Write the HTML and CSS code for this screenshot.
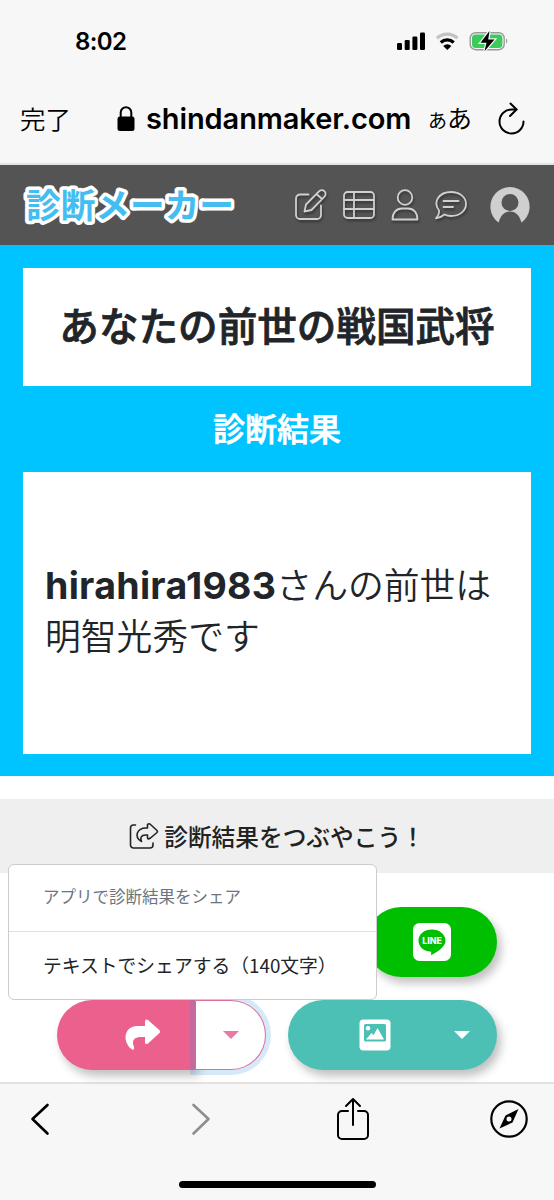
FILE: index.html
```html
<!DOCTYPE html>
<html lang="ja">
<head>
<meta charset="utf-8">
<title>診断メーカー</title>
<link rel="stylesheet" href="styles.css">
</head>
<body>
<div class="phone">
  <div class="browser-top">
    <div class="status">
      <span class="clock">8:02</span>
      <svg class="status-icons" width="112" height="24" viewBox="0 0 112 24">
        <g fill="#000"><rect x="0" y="13" width="5" height="7" rx="1.3"/><rect x="7.700" y="10" width="5" height="10" rx="1.3"/><rect x="15.400" y="6.500" width="5" height="13.500" rx="1.3"/><rect x="23" y="2.500" width="5" height="17.500" rx="1.3"/></g>
        <path d="M40 8.200a15 15 0 0 1 20.500 0" fill="none" stroke="#c3c3c3" stroke-width="3.400"/>
        <path d="M43.800 12.400a9.600 9.600 0 0 1 12.900 0" fill="none" stroke="#000" stroke-width="3.400"/>
        <path d="M46.200 15.900a6 6 0 0 1 8.200 0L50.300 20Z"/>
        <rect x="73.200" y="2.700" width="34" height="17" rx="5.500" fill="none" stroke="#999" stroke-width="1.400"/>
        <path d="M109 8.500a3 3 0 0 1 0 5z" fill="#999"/>
        <rect x="75" y="4.500" width="30.400" height="13.400" rx="3.600" fill="#3bcb5b"/>
        <path d="M92.500 1 83.500 12.700H89.500L87.500 21.200 97.500 9.500H91.200Z" fill="#000" stroke="#f7f7f7" stroke-width="2.500" paint-order="stroke"/>
      </svg>
    </div>
    <div class="address">
      <span class="done">完了</span>
      <svg class="lock" width="18" height="26" viewBox="0 0 18 26"><rect x=".5" y="10.500" width="17" height="14.500" rx="2.500"/><path d="M3.700 11V6.500a5.300 5.300 0 0 1 10.600 0V11" fill="none" stroke="#000" stroke-width="2"/></svg>
      <span class="domain">shindanmaker.com</span>
      <span class="reader"><small>あ</small>あ</span>
      <svg class="reload" width="28" height="34" viewBox="0 0 28 34"><g fill="none" stroke="#000" stroke-width="2" stroke-linecap="round" stroke-linejoin="round"><path d="M25.500 19.500A12 12 0 1 1 13.500 7.500h5"/><path d="m12.500 1.500 6 6-6.500 6.500"/></g></svg>
    </div>
  </div>

  <header class="site-header">
    <svg class="logo" width="218" height="46" viewBox="0 0 218 46"><text x="6" y="36" textLength="208" lengthAdjust="spacingAndGlyphs">診断メーカー</text></svg>
    <nav class="site-nav">
      <svg width="32" height="32" viewBox="0 0 32 32"><path d="M13.500 5.500H5a4 4 0 0 0-4 4V26a4 4 0 0 0 4 4h17a4 4 0 0 0 4-4v-9.500M9.500 22.500l1.500-7L24 2.300a3.700 3.700 0 0 1 5.600 5.200L16.500 21ZM21.500 5l5.500 5"/></svg>
      <svg width="32" height="32" viewBox="0 0 32 32"><rect x="1" y="3" width="30" height="26" rx="3.500"/><path d="M1 11h30M1 20h30M11 3v26"/></svg>
      <svg width="28" height="32" viewBox="0 0 28 32"><circle cx="14" cy="8.500" r="7.300"/><path d="M1.500 30.500c0-7 4-11 9.500-11h6c5.500 0 9.500 4 9.500 11Z"/></svg>
      <svg width="32" height="32" viewBox="0 0 32 32"><path d="M4 21.500C-2.500 13 4 3 16 3c8.500 0 15 5 15 12S24.500 27 16 27c-2.500 0-4.500-.5-6.500-1.500-2.500 2-5.500 3.500-8.500 3.800 2-2 3.500-5 3-7.800ZM8.500 12h15M8.500 18H18"/></svg>
      <svg class="avatar" width="40" height="38" viewBox="0 0 40 38"><path d="M8.500 36.500A19.600 19.600 0 1 1 31.500 36.500Z"/><circle class="cutout" cx="20" cy="16.500" r="8.500"/><path class="cutout" d="M8.500 37C10.500 29.500 14 25.500 20 25.500S29.500 29.500 31.500 37Z"/></svg>
    </nav>
  </header>

  <main>
    <section class="diagnosis">
      <h1 class="card title">あなたの前世の戦国武将</h1>
      <h2 class="result-heading">診断結果</h2>
      <div class="card result"><b>hirahira1983</b>さんの前世は<br>明智光秀です</div>
    </section>
    <div class="tweet-heading">
      <svg width="30" height="26" viewBox="0 0 30 26"><path d="M6.500 2H4.500A3 3 0 0 0 1.500 5v17a3 3 0 0 0 3 3H21a3 3 0 0 0 3-3v-2M18.500 5V1.500Q20 0 21.500 1.500L28 7.500Q29 8.500 28 9.500L21.500 15Q18.500 17 18.500 14.500V12h-2C12 12 11 15 12.500 18.500 4.500 14 8 5 17 5Z"/></svg>
      <span>診断結果をつぶやこう！</span>
    </div>
    <section class="share">
      <div class="share-grid">
        <button class="pill line">
          <svg width="38" height="38" viewBox="0 0 38 38"><rect width="38" height="38" rx="6.500" fill="#fff"/><path d="M19 6.500c-7.800 0-13.500 4.800-13.500 11S10.500 28 17 28.500c1.800.2 1.200 1.200 1 3.700 4-1.800 15-8 14.500-14.700C32.300 11.300 26.500 6.500 19 6.500Z" fill="#00bf00"/><text x="9.200" y="21.200" textLength="19.600" lengthAdjust="spacingAndGlyphs">LINE</text></svg>
        </button>
        <div class="pill split pink">
          <button class="action"><svg width="36" height="32" viewBox="0 0 36 32"><path fill="#fff" d="M20 2.500C20 0 22 0 23 1l11.500 10.200q1.500 1.400 0 2.800L23 24.500c-1.200 1.200-3 .5-3-1v-5.500h-5c-5 0-8.500 3.500-6.500 8.500.8 2.500 1 3.500-.2 4.200C6.500 31 .5 25.500.5 18.500.5 12 5 7 12 7h8Z"/></svg></button>
          <button class="toggle"><i class="caret"></i></button>
        </div>
        <div class="pill split teal">
          <button class="action"><svg width="32" height="32" viewBox="0 0 32 32"><rect x=".5" y=".5" width="31" height="31" rx="4" fill="#fff"/><rect x="5" y="5" width="22" height="17.500" rx="1.500" fill="#4dc0b5"/><circle cx="9" cy="9.300" r="2.200" fill="#fff"/><path d="m7 20.500 5.500-6.500 2 2.300L18.500 9 25 20.500Z" fill="#fff"/></svg></button>
          <button class="toggle"><i class="caret"></i></button>
        </div>
      </div>
      <div class="menu">
        <div class="menu-title">アプリで診断結果をシェア</div>
        <div class="menu-item">テキストでシェアする（140文字）</div>
      </div>
    </section>
  </main>

  <footer class="browser-bottom">
    <div class="toolbar">
      <svg width="20" height="34" viewBox="0 0 20 34"><path d="M17.500 3 2.500 17 17.500 31.500" stroke-width="2.600"/></svg>
      <svg class="forward" width="20" height="34" viewBox="0 0 20 34"><path d="m2.500 3 15 14-15 14.500" stroke-width="2.600"/></svg>
      <svg class="export" width="34" height="44" viewBox="0 0 34 44"><path d="M12 14H6a4 4 0 0 0-4 4v20a4 4 0 0 0 4 4h22a4 4 0 0 0 4-4V18a4 4 0 0 0-4-4h-6M17 28V2.500M10 9l7-7 7 7" stroke-width="2"/></svg>
      <svg class="compass" width="38" height="38" viewBox="0 0 38 38"><circle cx="19" cy="19" r="17.700" stroke-width="2.200"/><path fill="#000" fill-rule="evenodd" stroke="none" d="M28.500 9 22.500 22.500 9.500 28.500 15.500 15.500ZM19 16.500a2.500 2.500 0 1 0 0 5 2.500 2.500 0 0 0 0-5Z"/></svg>
    </div>
    <div class="home-indicator"></div>
  </footer>
</div>
</body>
</html>
```
FILE: styles.css
```css
* { box-sizing: border-box; }
body { margin: 0; font-family: Inter, "Noto Sans CJK JP", sans-serif; color: #212529; background: #fff; }
button { border: 0; padding: 0; margin: 0; background: none; color: inherit; }
svg { display: block; flex: none; overflow: visible; }
.phone { width: 554px; height: 1200px; overflow: hidden; display: flex; flex-direction: column; }

.browser-top { height: 165px; flex: none; background: #f7f7f7; border-bottom: 2px solid #e3e3e3; color: #000; }
.status { height: 80px; padding: 30px 44px 0 75px; display: flex; justify-content: space-between; }
.clock { font-size: 24px; line-height: 24px; font-weight: 600; letter-spacing: -.6px; }
.status-icons { margin-right: 1px; }
.address { height: 76px; padding-left: 20px; display: flex; align-items: center; }
.done { width: 97px; font-size: 25.500px; font-weight: 350; margin-top: -2px; }
.lock { margin-top: 2px; }
.domain { margin-left: 11px; width: 265px; font-size: 29px; font-weight: 600; letter-spacing: -.1px; white-space: nowrap; }
.reader { margin-left: 17px; width: 46px; font-size: 25px; white-space: nowrap; margin-top: -2px; }
.reader small { font-size: 19px; }
.reload { margin: 1px 0 0 24px; }

.site-header { height: 80px; flex: none; background: #545454; display: flex; align-items: center; padding: 0 24px 0 20px; justify-content: space-between; }
.logo text { font-family: "Noto Sans CJK JP", sans-serif; font-size: 34px; font-weight: 700; fill: #45bdf0; stroke: #fff; stroke-width: 7px; stroke-linejoin: round; paint-order: stroke; }
.site-nav { display: flex; align-items: center; gap: 16px; }
.site-nav svg { fill: none; stroke: #d0d0d0; stroke-width: 1.800; stroke-linejoin: round; stroke-linecap: round; filter: drop-shadow(1px 2px 1px #333); }
.site-nav .avatar { fill: #cfcfcf; stroke: none; margin-left: 7px; filter: none; }
.avatar .cutout { fill: #545454; }

main { flex: 1; min-height: 0; }
.diagnosis { height: 531px; background: #00c4ff; padding: 23px; }
.card { background: #fff; margin: 0; }
.title { height: 118px; padding-top: 29px; font-size: 39.600px; line-height: 60px; font-weight: 500; -webkit-text-stroke: .8px; text-align: center; white-space: nowrap; }
.result-heading { margin: 0; height: 86px; padding-top: 23px; font-size: 32px; line-height: 42px; font-weight: 500; -webkit-text-stroke: .7px; color: #fff; text-align: center; }
.result { height: 282px; padding: 89px 22px 0; font-size: 35.800px; line-height: 51px; font-weight: 350; white-space: nowrap; }
.result b { font-weight: 700; font-size: 37.500px; line-height: 1; letter-spacing: .300px; }
.tweet-heading { margin-top: 22.500px; height: 74.500px; background: #efefef; display: flex; justify-content: center; align-items: center; gap: 5px; font-size: 23.700px; font-weight: 500; color: #222; }
.tweet-heading svg { fill: none; stroke: #222; stroke-width: 1.600; stroke-linecap: round; stroke-linejoin: round; }

.share { height: 210px; position: relative; }
.share-grid { padding: 34px 57px 0; display: grid; grid-template-columns: 209px 209px; grid-template-rows: 70px 70px; gap: 23px 22px; }
.pill { border-radius: 35px; box-shadow: 4px 6px 10px rgba(0,0,0,.25); }
.line { grid-column: 2; justify-self: end; width: 131px; background: #00bf00; display: flex; align-items: center; justify-content: center; }
.line text { fill: #fff; font-family: Inter, sans-serif; font-size: 9.500px; font-weight: 800; }
.split { display: flex; }
.action { flex: 1; display: flex; align-items: center; justify-content: center; }
.toggle { width: 71px; display: flex; align-items: center; justify-content: center; }
.pink { box-shadow: none; }
.pink .action { padding-left: 34px; background: #eb608d; border-radius: 35px 0 0 35px; box-shadow: 4px 6px 10px rgba(0,0,0,.25); }
.pink .toggle { background: #fff; border: 1.500px solid #dc6e9c; border-left-color: #eb608d; border-radius: 0 35px 35px 0; box-shadow: 0 0 0 5px rgba(52,144,220,.2); color: #e57ca5; }
.teal { background: #4dc0b5; }
.teal .action { padding-left: 36px; }
.teal .toggle { color: #fff; }
.caret { border: 8px solid transparent; border-top-color: currentColor; border-bottom: 0; }
.menu { position: absolute; left: 8px; top: -9px; width: 369px; height: 136px; background: #fff; border: 1.500px solid #ccc; border-radius: 6px; font-size: 18.800px; white-space: nowrap; }
.menu-title { height: 67px; border-bottom: 1px solid #dfe0e2; padding-left: 34px; line-height: 65px; font-size: 16.500px; color: #6c757d; }
.menu-item { padding-left: 34px; line-height: 66px; font-family: "Noto Sans CJK JP", sans-serif; }

.browser-bottom { height: 118px; flex: none; background: #f7f7f7; border-top: 2px solid #e2e2e2; }
.toolbar { height: 70px; padding-left: 30px; display: flex; align-items: center; }
.toolbar svg { fill: none; stroke: #000; stroke-linecap: round; stroke-linejoin: round; }
.toolbar .forward { margin-left: 141px; stroke: #8e8e8e; }
.toolbar .export { margin-left: 125px; }
.toolbar .compass { margin-left: 120px; }
.home-indicator { width: 197px; height: 7px; border-radius: 4px; background: #000; margin: 27px auto 0; }
```
